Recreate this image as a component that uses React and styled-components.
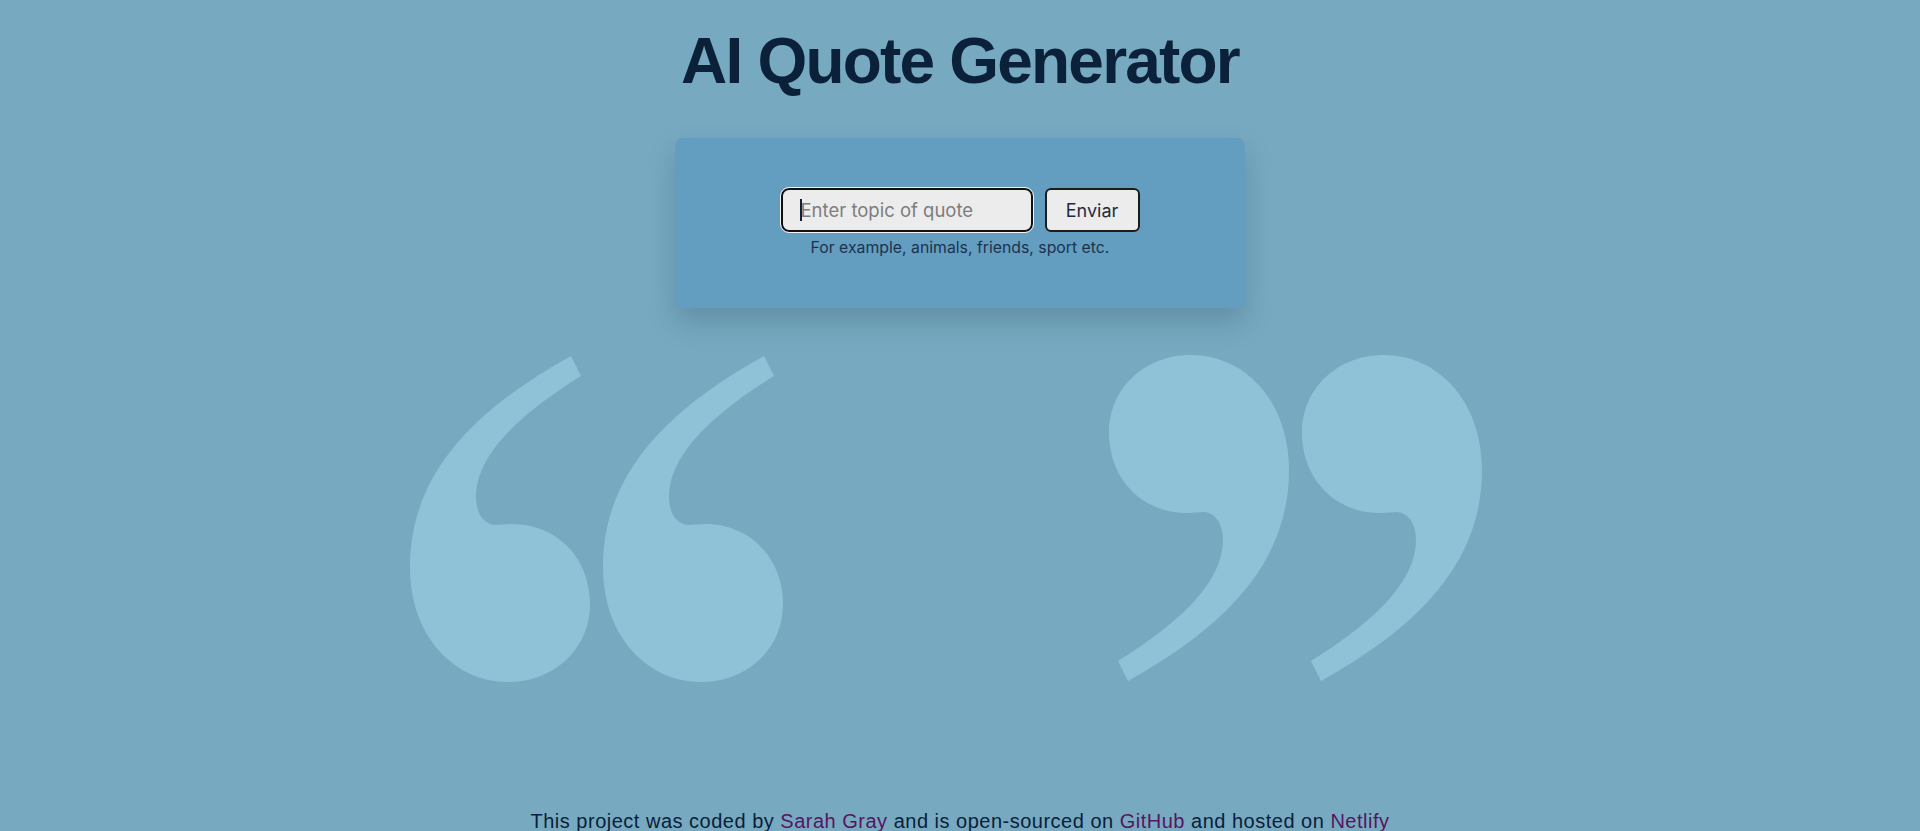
import React, { useState } from "react";
import styled, { createGlobalStyle } from "styled-components";

const GlobalStyle = createGlobalStyle`
  html, body {
    margin: 0;
    padding: 0;
    background: #77aac1;
    font-family: "Liberation Sans", Arial, sans-serif;
  }
`;

const Page = styled.div`
  min-height: 831px;
  display: flex;
  flex-direction: column;
  align-items: center;
  background: #77aac1;
  overflow: hidden;
`;

const Title = styled.h1`
  margin: 24px 0 0;
  font-size: 64px;
  line-height: 74px;
  font-weight: 700;
  letter-spacing: -1.8px;
  color: #0b2039;
`;

const Card = styled.form`
  box-sizing: border-box;
  width: 570px;
  margin-top: 40px;
  padding: 50px 0 50px;
  background: #639dbf;
  border-radius: 8px;
  box-shadow: 0 14px 28px rgba(20, 50, 70, 0.22);
  display: flex;
  flex-direction: column;
  align-items: center;
`;

const Row = styled.div`
  display: flex;
  gap: 12px;
  align-items: center;
`;

const Field = styled.div`
  position: relative;
`;

const Caret = styled.span`
  position: absolute;
  left: 19px;
  top: 11px;
  width: 2px;
  height: 22px;
  background: #0b2039;
  pointer-events: none;
`;

const Input = styled.input`
  box-sizing: border-box;
  width: 252px;
  height: 44px;
  padding: 0 18px;
  background: #ececec;
  border: 2px solid #111;
  border-radius: 8px;
  outline: 1.5px solid #f4f4f4;
  font-family: Inter, "Liberation Sans", sans-serif;
  font-size: 18.5px;
  color: #1b2a3c;
  caret-color: #0b2039;

  &::placeholder {
    color: #7d7d7d;
  }
`;

const Button = styled.button`
  box-sizing: border-box;
  height: 44px;
  width: 95px;
  background: #ececec;
  border: 2px solid #1c1c1c;
  border-radius: 6px;
  font-family: Inter, "Liberation Sans", sans-serif;
  font-size: 18px;
  color: #1e2b40;
  cursor: pointer;
`;

const Hint = styled.p`
  margin: 6px 0 0;
  font-family: Inter, "Liberation Sans", sans-serif;
  font-size: 15.8px;
  line-height: 20px;
  color: #1b3350;
`;

const Quotes = styled.div`
  display: flex;
  gap: 326px;
  margin: 47px 28px 0 0;
`;

const Footer = styled.footer`
  margin-top: 128px;
  font-size: 20px;
  line-height: 22px;
  letter-spacing: 0.5px;
  color: #0b2039;
  white-space: nowrap;
`;

const Link = styled.a`
  color: #561560;
  text-decoration: none;
`;

const COMMA =
  "M 82 0 C 135 0 180 45 180 115 C 180 205 120 270 19 326 L 9 306 " +
  "C 75 265 114 225 114 185 C 114 168 106 158 95 157 C 90 157 84 158 78 158 " +
  "C 33 158 0 124 0 78 C 0 33 36 0 82 0 Z";

const QuoteMark = ({ open }) => (
  <svg width="373" height="327" viewBox="0 0 373 327">
    {[0, 193].map((x) => (
      <g key={x} transform={`translate(${x} 0)`}>
        <path
          d={COMMA}
          fill="#8fc2d6"
          transform={open ? "rotate(180 90 163.5)" : undefined}
        />
      </g>
    ))}
  </svg>
);

export default function App() {
  const [topic, setTopic] = useState("");

  return (
    <Page>
      <GlobalStyle />
      <Title>AI Quote Generator</Title>
      <Card onSubmit={(e) => e.preventDefault()}>
        <Row>
          <Field>
            <Input
              type="text"
              placeholder="Enter topic of quote"
              value={topic}
              onChange={(e) => setTopic(e.target.value)}
            />
            {!topic && <Caret />}
          </Field>
          <Button type="submit">Enviar</Button>
        </Row>
        <Hint>For example, animals, friends, sport etc.</Hint>
      </Card>
      <Quotes>
        <QuoteMark open />
        <QuoteMark />
      </Quotes>
      <Footer>
        This project was coded by <Link href="#">Sarah Gray</Link> and is
        open-sourced on <Link href="#">GitHub</Link> and hosted on{" "}
        <Link href="#">Netlify</Link>
      </Footer>
    </Page>
  );
}
